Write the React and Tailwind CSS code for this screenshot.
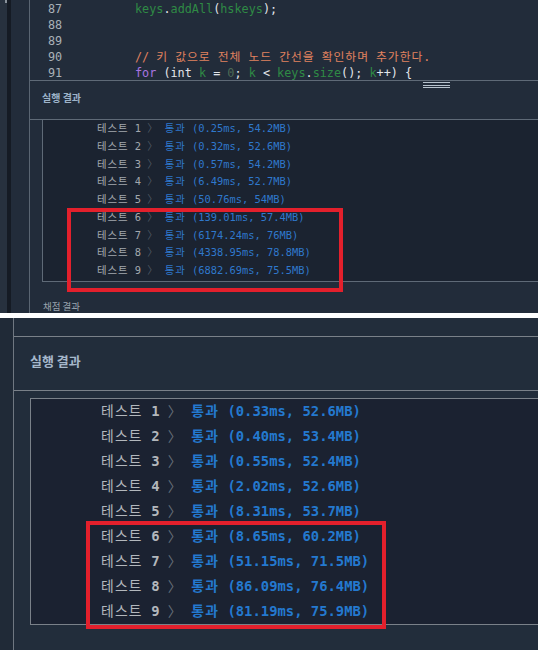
const mono = "font-['DejaVu_Sans_Mono','Noto_Sans_CJK_KR',monospace]";

const topRows = [
  ['1', '(0.25ms, 54.2MB)'],
  ['2', '(0.32ms, 52.6MB)'],
  ['3', '(0.57ms, 54.2MB)'],
  ['4', '(6.49ms, 52.7MB)'],
  ['5', '(50.76ms, 54MB)'],
  ['6', '(139.01ms, 57.4MB)'],
  ['7', '(6174.24ms, 76MB)'],
  ['8', '(4338.95ms, 78.8MB)'],
  ['9', '(6882.69ms, 75.5MB)'],
];

const bottomRows = [
  ['1', '(0.33ms, 52.6MB)'],
  ['2', '(0.40ms, 53.4MB)'],
  ['3', '(0.55ms, 52.4MB)'],
  ['4', '(2.02ms, 52.6MB)'],
  ['5', '(8.31ms, 53.7MB)'],
  ['6', '(8.65ms, 60.2MB)'],
  ['7', '(51.15ms, 71.5MB)'],
  ['8', '(86.09ms, 76.4MB)'],
  ['9', '(81.19ms, 75.9MB)'],
];

// syntax colours
const G = ({ children }) => <span className="text-[#2f8a45]">{children}</span>;
const W = ({ children }) => <span className="text-[#e2e6ea]">{children}</span>;

const codeLines = [
  ['87', <><G>keys</G><W>.</W><G>addAll</G><W>(</W><G>hskeys</G><W>);</W></>],
  ['88', null],
  ['89', null],
  [
    '90',
    <span className="text-[#e0825f]">
      // <span className="tracking-[0.95px]">키</span> <span className="tracking-[0.95px]">값으로</span>{' '}
      <span className="tracking-[0.95px]">전체</span> <span className="tracking-[0.95px]">노드</span>{' '}
      <span className="tracking-[0.95px]">간선을</span> <span className="tracking-[0.95px]">확인하며</span>{' '}
      <span className="tracking-[0.95px]">추가한다</span>.
    </span>,
  ],
  [
    '91',
    <>
      <span className="text-[#a874e0]">for</span>
      <W> (int </W><G>k</G><W> = </W><span className="text-[#4d6a55]">0</span><W>; </W>
      <G>k</G><W> &lt; </W><G>keys</G><W>.</W><G>size</G><W>(); </W><G>k</G><W>++) {'{'}</W>
    </>,
  ],
];

const ResultRow = ({ num, text, big }) => {
  const hg = big ? 'tracking-[1.2px]' : 'tracking-[0.9px]';
  return (
    <div className={`whitespace-pre ${big ? 'h-[25px] leading-[25px] text-[13.85px]' : 'h-[17.75px] leading-[17.75px] text-[10.4px]'}`}>
      <span className={`${hg} ${big ? 'text-[#b3b8bd]' : 'text-[#a3a8ae]'}`}>테스트</span>
      <span> </span>
      <span className={big ? 'text-[#b3b7bc] font-bold' : 'text-[#a3a8ae]'}>{num}</span>
      <span> </span>
      <span className={`${hg} ${big ? 'text-[#66707a]' : 'text-[#4f5863]'}`}>〉</span>
      <span> </span>
      <span className={big ? 'text-[#2479cf] font-bold' : 'text-[#2f78cc]'}>
        <span className={hg}>통과</span> {text}
      </span>
    </div>
  );
};

export default function App() {
  return (
    <div className="w-[538px] h-[650px] overflow-hidden bg-white">
      {/* upper capture */}
      <div className="relative h-[313px] flex bg-[#222c3a] overflow-hidden">
        <div className="w-[29px] flex shrink-0">
          <div className="w-[7px] bg-[#27313e] relative">
            <div className="absolute left-[5px] top-0 w-[2px] h-[3px] bg-[#8a939c]" />
          </div>
          <div className="w-[4px] bg-[#151b24]" />
          <div className="flex-1" />
        </div>
        <div className="flex-1 border-l border-[#5a6572] flex flex-col">
          <div className={`h-[80px] pt-[1px] text-[11.8px] leading-[16px] ${mono}`}>
            {codeLines.map(([n, code]) => (
              <div key={n} className="flex h-[16px] whitespace-pre">
                <span className="w-[105px] pl-[18px] shrink-0 text-[#a9b1b8]">{n}</span>
                <span>{code}</span>
              </div>
            ))}
          </div>
          <div className="relative h-[40px] border-t border-b border-[#5f6a77]">
            <div className="absolute left-[393px] top-[1px] w-[27px] flex flex-col gap-[1.5px]">
              <div className="h-[1px] bg-[#b7c2cd]" />
              <div className="h-[1px] bg-[#b7c2cd]" />
              <div className="h-[1px] bg-[#b7c2cd]" />
            </div>
            <div className="pl-[12px] pt-[10px] text-[10px] leading-[14px] font-bold text-[#9db3c9] font-['Noto_Sans_CJK_KR',sans-serif]">
              실행 결과
            </div>
          </div>
          <div className="pl-[12px]">
            <div className={`bg-[#1b2330] border-l border-b border-[#5f6a77] pl-[54px] pb-[1px] ${mono}`}>
              {topRows.map(([n, t]) => (
                <ResultRow key={n} num={n} text={t} />
              ))}
            </div>
          </div>
          <div className="pl-[13px] pt-[18px] text-[9.5px] leading-[12px] text-[#9aa4ae] font-['Noto_Sans_CJK_KR',sans-serif]">
            채점 결과
          </div>
        </div>
        <div className="absolute left-[67px] top-[208px] w-[276px] h-[84px] border-4 border-[#e3202c]" />
      </div>

      {/* separator */}
      <div className="h-[5px] bg-white" />

      {/* lower capture */}
      <div className="relative h-[332px] flex bg-[#222d3b] overflow-hidden">
        <div className="w-[13px] shrink-0 bg-[#202a37]" />
        <div className="flex-1 border-l border-[#6f7781] flex flex-col">
          <div className="h-[19px] border-b border-[#7a8189]" />
          <div className="h-[54px] border-b border-[#7a8189] pl-[16px] pt-[15px]">
            <div className="text-[13px] leading-[18px] font-bold text-[#a6b8cb] font-['Noto_Sans_CJK_KR',sans-serif]">
              실행 결과
            </div>
          </div>
          <div className="pl-[16px] pt-[7px]">
            <div className={`bg-[#1b2231] border-t border-l border-b border-[#7a8189] pl-[70px] ${mono}`}>
              {bottomRows.map(([n, t]) => (
                <ResultRow key={n} num={n} text={t} big />
              ))}
            </div>
          </div>
        </div>
        <div className="absolute left-[86px] top-[203px] w-[300px] h-[108px] border-4 border-[#e3202c]" />
      </div>
    </div>
  );
}
